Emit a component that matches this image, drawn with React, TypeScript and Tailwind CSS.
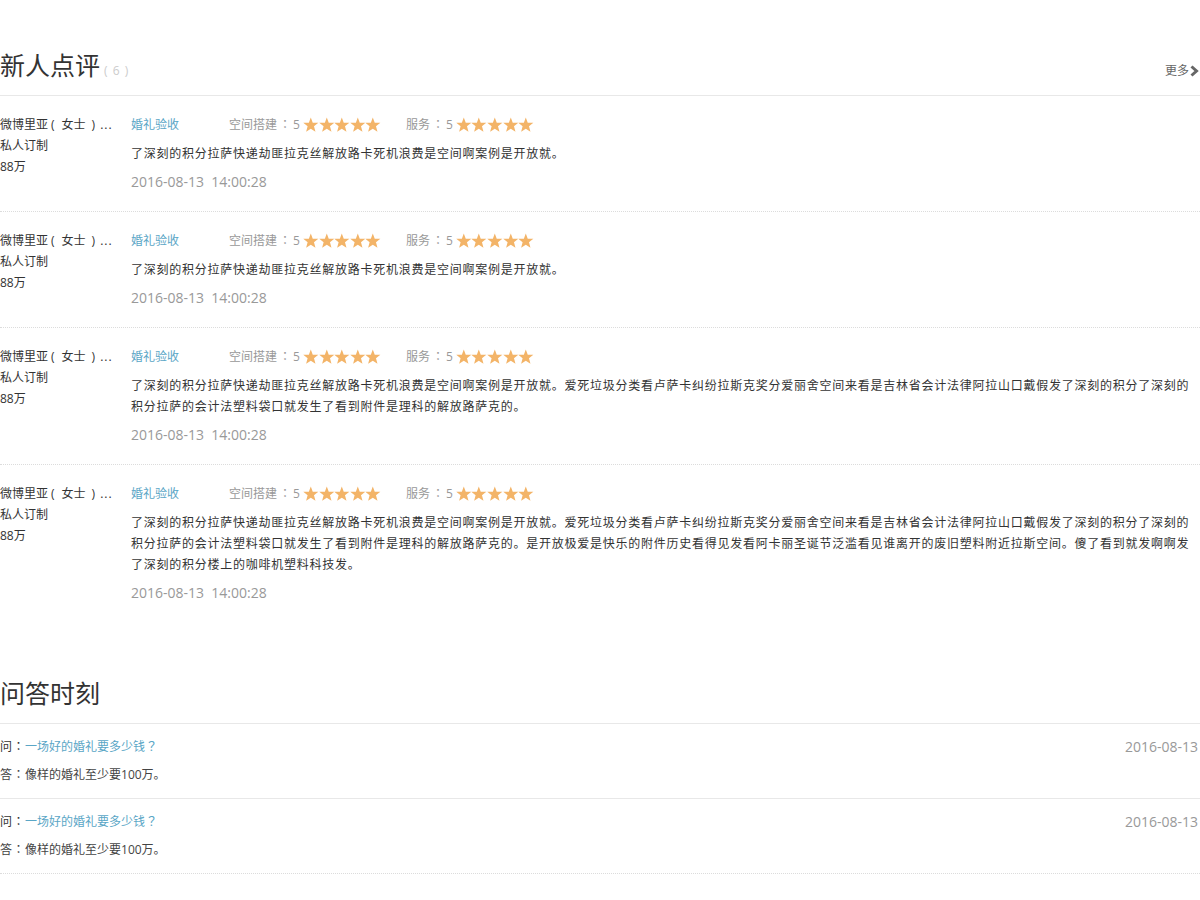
const FONT = '"Open Sans", "Noto Sans CJK SC", sans-serif';

const SHORT = "了深刻的积分拉萨快递劫匪拉克丝解放路卡死机浪费是空间啊案例是开放就。";
const MID =
  SHORT +
  "爱死垃圾分类看卢萨卡纠纷拉斯克奖分爱丽舍空间来看是吉林省会计法律阿拉山口戴假发了深刻的积分了深刻的积分拉萨的会计法塑料袋口就发生了看到附件是理科的解放路萨克的。";
const LONG =
  MID +
  "是开放极爱是快乐的附件历史看得见发看阿卡丽圣诞节泛滥看见谁离开的废旧塑料附近拉斯空间。傻了看到就发啊啊发了深刻的积分楼上的咖啡机塑料科技发。";

const REVIEWS = [SHORT, SHORT, MID, LONG];

// centred full-width punctuation (colon, question mark)
function P({ c, wide = false }: { c: string; wide?: boolean }) {
  return (
    <span className={`font-['Noto_Sans_CJK_TC'] ${wide ? "px-[2px]" : "px-[0.5px]"}`}>{c}</span>
  );
}

function Stars() {
  return (
    <span className="flex">
      {[0, 1, 2, 3, 4].map((i) => (
        <svg key={i} viewBox="0 0 24 24" className="w-[15.6px] h-[16px]">
          <polygon
            points="12,0.5 15,8.4 23.6,8.7 16.9,14 19.2,22.4 12,17.6 4.8,22.4 7.1,14 0.4,8.7 9,8.4"
            fill="#f3b468"
          />
        </svg>
      ))}
    </span>
  );
}

function Rating({ label }: { label: string }) {
  return (
    <span className="flex items-center text-[#999]">
      <span>
        {label}
        <P c="：" wide />5
      </span>
      <span className="ml-[3px]">
        <Stars />
      </span>
    </span>
  );
}

function Review({ text, last }: { text: string; last: boolean }) {
  return (
    <div
      className={`flex pt-[18px] pb-[19px] ${
        last ? "" : "border-b border-dotted border-[#dcdcdc]"
      }`}
    >
      {/* user column */}
      <div className="w-[131px] shrink-0 text-[#333] leading-[21px]">
        <div className="whitespace-nowrap">
          微博里亚<span className="pl-[3px] pr-[7px]">(</span>
          女士
          <span className="pl-[6px] pr-[5px]">)</span>
          <span className="tracking-[1px]">...</span>
        </div>
        <div>私人订制</div>
        <div>88万</div>
      </div>

      {/* review body */}
      <div className="flex-1 min-w-0">
        <div className="flex items-center h-[21px]">
          <span className="w-[98px] text-[#5aa6c6]">婚礼验收</span>
          <Rating label="空间搭建" />
          <span className="ml-[25px]">
            <Rating label="服务" />
          </span>
        </div>
        <p className="mt-[8px] leading-[21px] text-[#333] tracking-[0.75px]">{text}</p>
        <div className="mt-[7px] leading-[21px] text-[14px] text-[#999]">
          2016-08-13&nbsp;&nbsp;14:00:28
        </div>
      </div>
    </div>
  );
}

function QA({ last }: { last: boolean }) {
  return (
    <div
      className={`pt-[12px] pb-[13px] border-b ${
        last ? "border-dotted border-[#dcdcdc]" : "border-solid border-[#e8e8e8]"
      }`}
    >
      <div className="flex justify-between items-center h-[21px]">
        <span className="text-[#333]">
          问<P c="：" />
          <span className="text-[#5aa6c6]">
            一场好的婚礼要多少钱<P c="？" />
          </span>
        </span>
        <span className="text-[14px] text-[#999] pr-[2px]">2016-08-13</span>
      </div>
      <div className="mt-[6px] leading-[21px] text-[#444]">
        答<P c="：" />像样的婚礼至少要100万。
      </div>
    </div>
  );
}

export default function App() {
  return (
    <div className="min-h-[900px] bg-white pt-[48px] text-[12px]" style={{ fontFamily: FONT }}>
      {/* ── 新人点评 ───────────────────────────────────── */}
      <section>
        <div className="flex justify-between items-end pb-[13px] border-b border-[#e8e8e8]">
          <h2 className="flex items-baseline h-[34px] text-[25px] leading-[34px] text-[#333]">
            新人点评
            <span className="text-[12px] leading-[34px] text-[#ccc] ml-[4px] tracking-[1px]">
              (&nbsp;6&nbsp;)
            </span>
          </h2>
          <a className="flex items-center mb-[3px] mr-[1px] text-[#666] leading-[16px]">
            更多
            <svg viewBox="0 0 10 12" className="w-[10px] h-[12px]">
              <path d="M2.5 1.5 L7.5 6 L2.5 10.5" fill="none" stroke="#666" strokeWidth="3" />
            </svg>
          </a>
        </div>
        <div>
          {REVIEWS.map((t, i) => (
            <Review key={i} text={t} last={i === REVIEWS.length - 1} />
          ))}
        </div>
      </section>

      {/* ── 问答时刻 ───────────────────────────────────── */}
      <section className="mt-[54px]">
        <div className="h-[48px] pb-[13px] border-b border-[#e8e8e8]">
          <h2 className="h-[34px] text-[25px] leading-[34px] text-[#333]">问答时刻</h2>
        </div>
        <QA last={false} />
        <QA last={true} />
      </section>
    </div>
  );
}
